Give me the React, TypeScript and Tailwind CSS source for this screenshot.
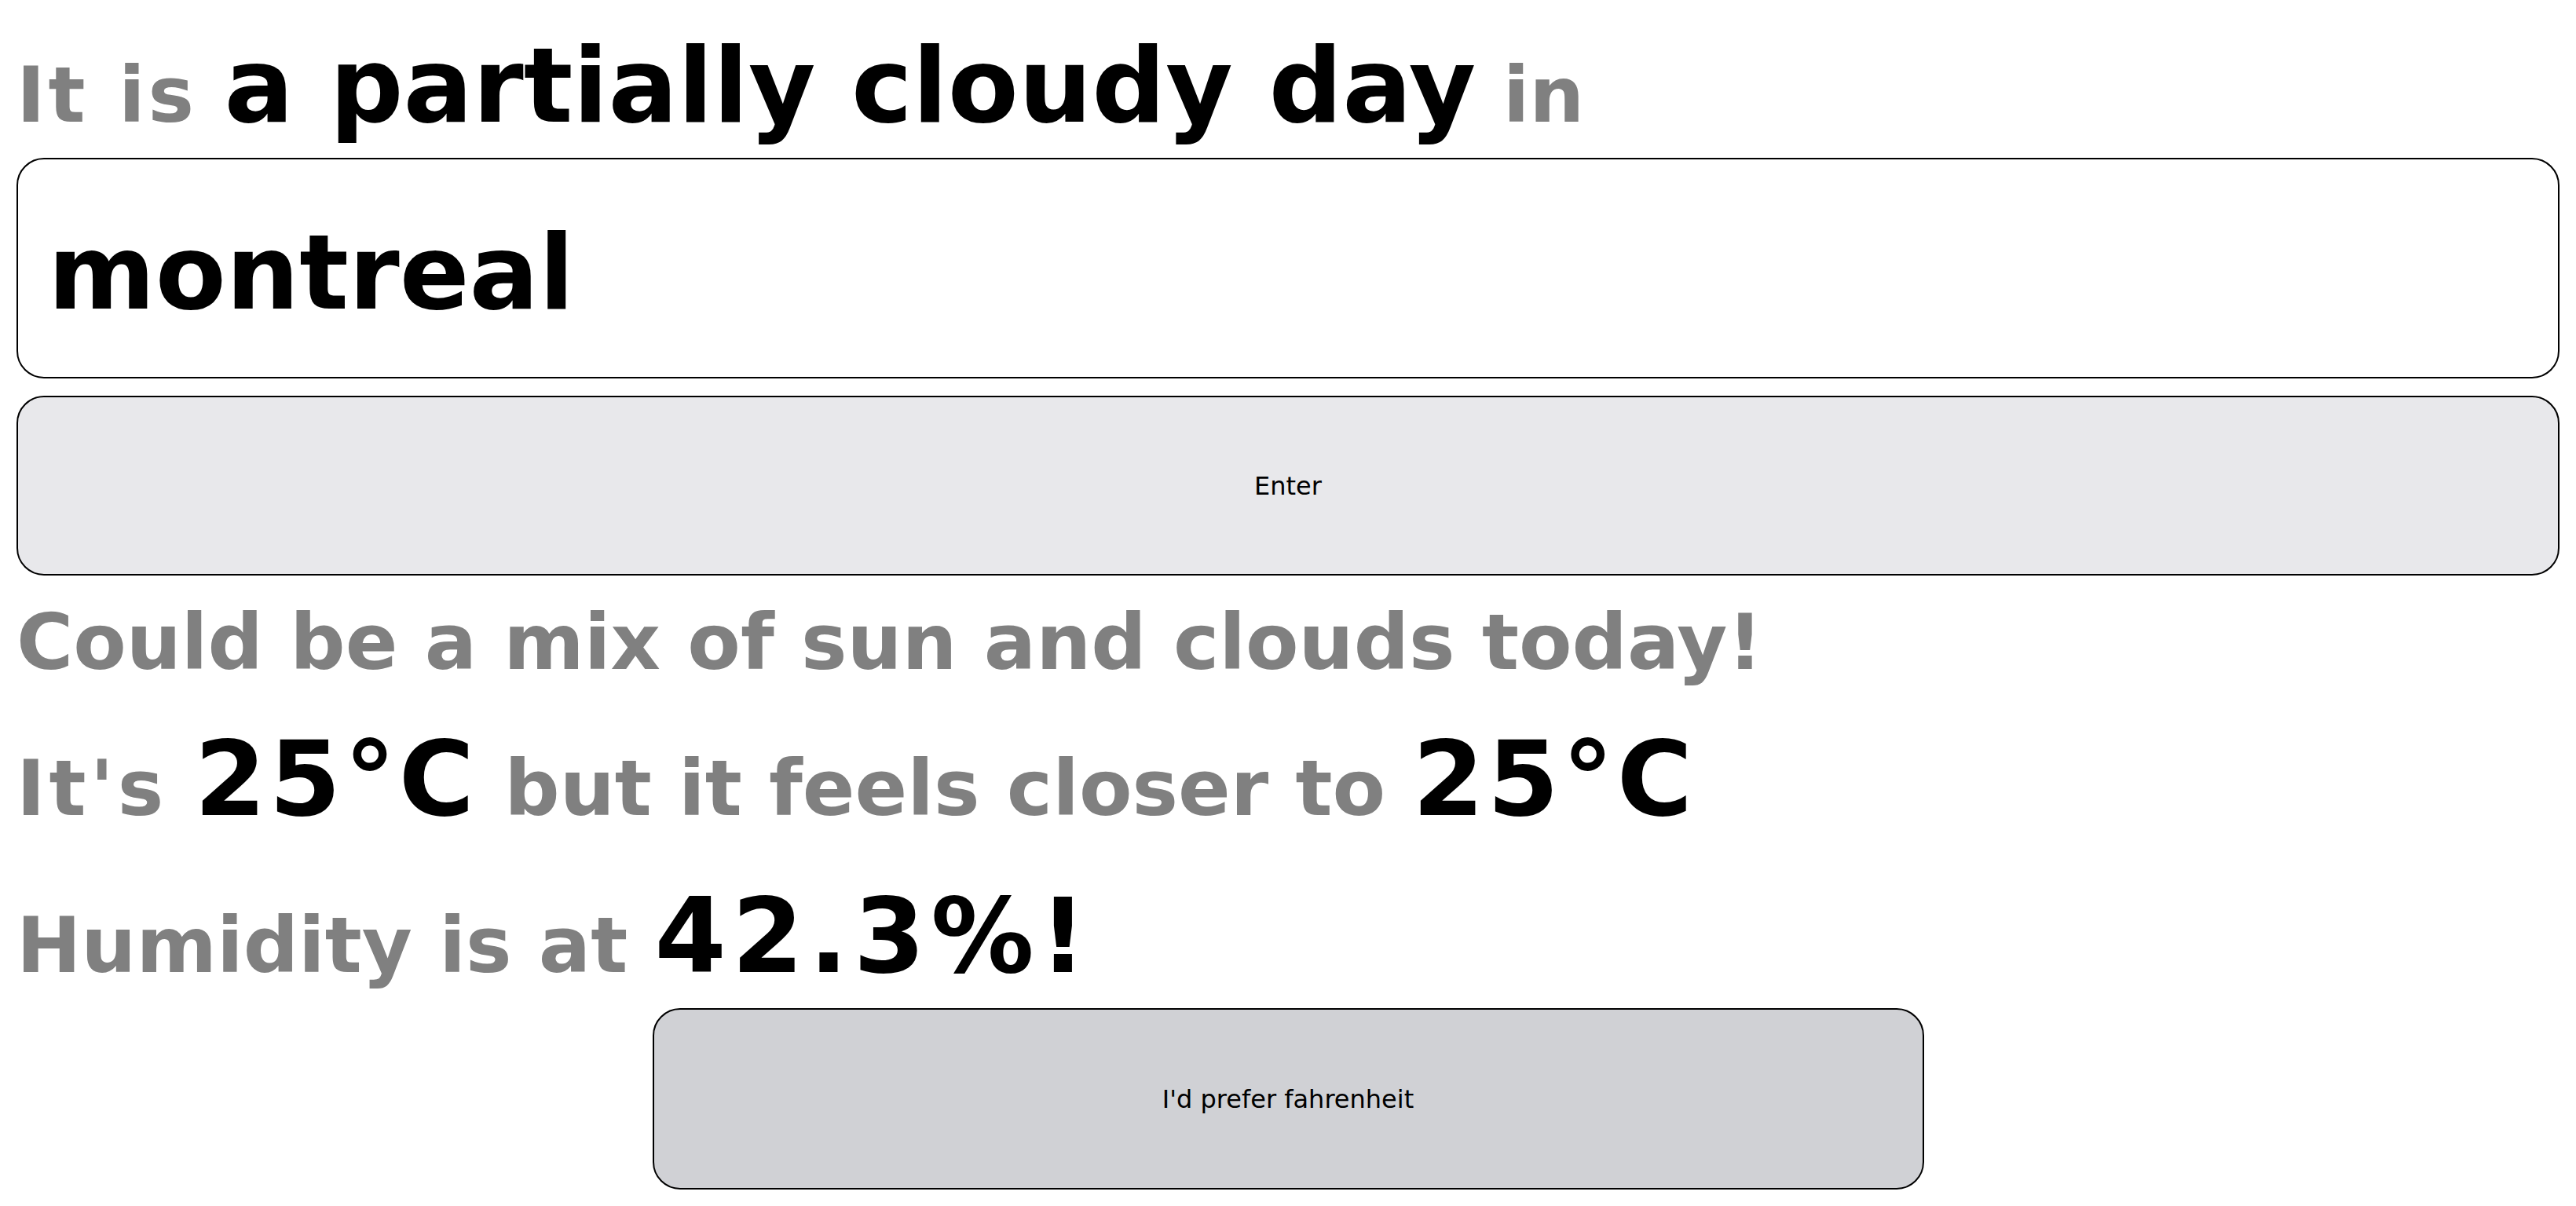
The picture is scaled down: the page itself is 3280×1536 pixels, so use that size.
import React from "react";

export default function App() {
  const grey = "text-[#808080]";
  return (
    <div className="min-h-screen bg-white px-[21px] font-['DejaVu_Sans',sans-serif] font-bold">
      <div className={`pt-[33px] text-[98.4px] leading-[normal] ${grey}`}>
        <span className="tracking-[4px]">It is</span>{" "}
        <span className="text-[131.2px] text-black">a partially cloudy day</span> in
      </div>
      <input
        readOnly
        value="montreal"
        className="mt-[15px] block w-full h-[281px] box-border rounded-[35px] border-2 border-black bg-white pl-[38px] pt-[12px] text-[131.2px] font-bold text-black font-['DejaVu_Sans',sans-serif] outline-none"
      />
      <button className="mt-[22px] flex w-full h-[229px] items-center justify-center rounded-[35px] border-2 border-black bg-[#e8e8eb] text-[32px] font-normal text-black font-['DejaVu_Sans',sans-serif]">
        Enter
      </button>
      <div className={`mt-[28px] text-[98.4px] leading-[normal] ${grey}`}>
        Could be a mix of sun and clouds today!
      </div>
      <div className={`mt-[41px] text-[98.4px] leading-[normal] ${grey}`}>
        <span className="tracking-[5px]">It's</span>{" "}
        <span className="text-[131.2px] tracking-[4px] text-black">25°C</span> but it feels closer to{" "}
        <span className="text-[131.2px] tracking-[4px] text-black">25°C</span>
      </div>
      <div className={`mt-[47px] text-[98.4px] leading-[normal] ${grey}`}>
        Humidity is at <span className="text-[131.2px] tracking-[7px] text-black">42.3%!</span>
      </div>
      <div className="mt-[15px] flex justify-center">
        <button className="flex w-1/2 h-[231px] items-center justify-center rounded-[35px] border-2 border-black bg-[#d0d1d5] text-[32px] font-normal text-black font-['DejaVu_Sans',sans-serif]">
          I'd prefer fahrenheit
        </button>
      </div>
    </div>
  );
}
